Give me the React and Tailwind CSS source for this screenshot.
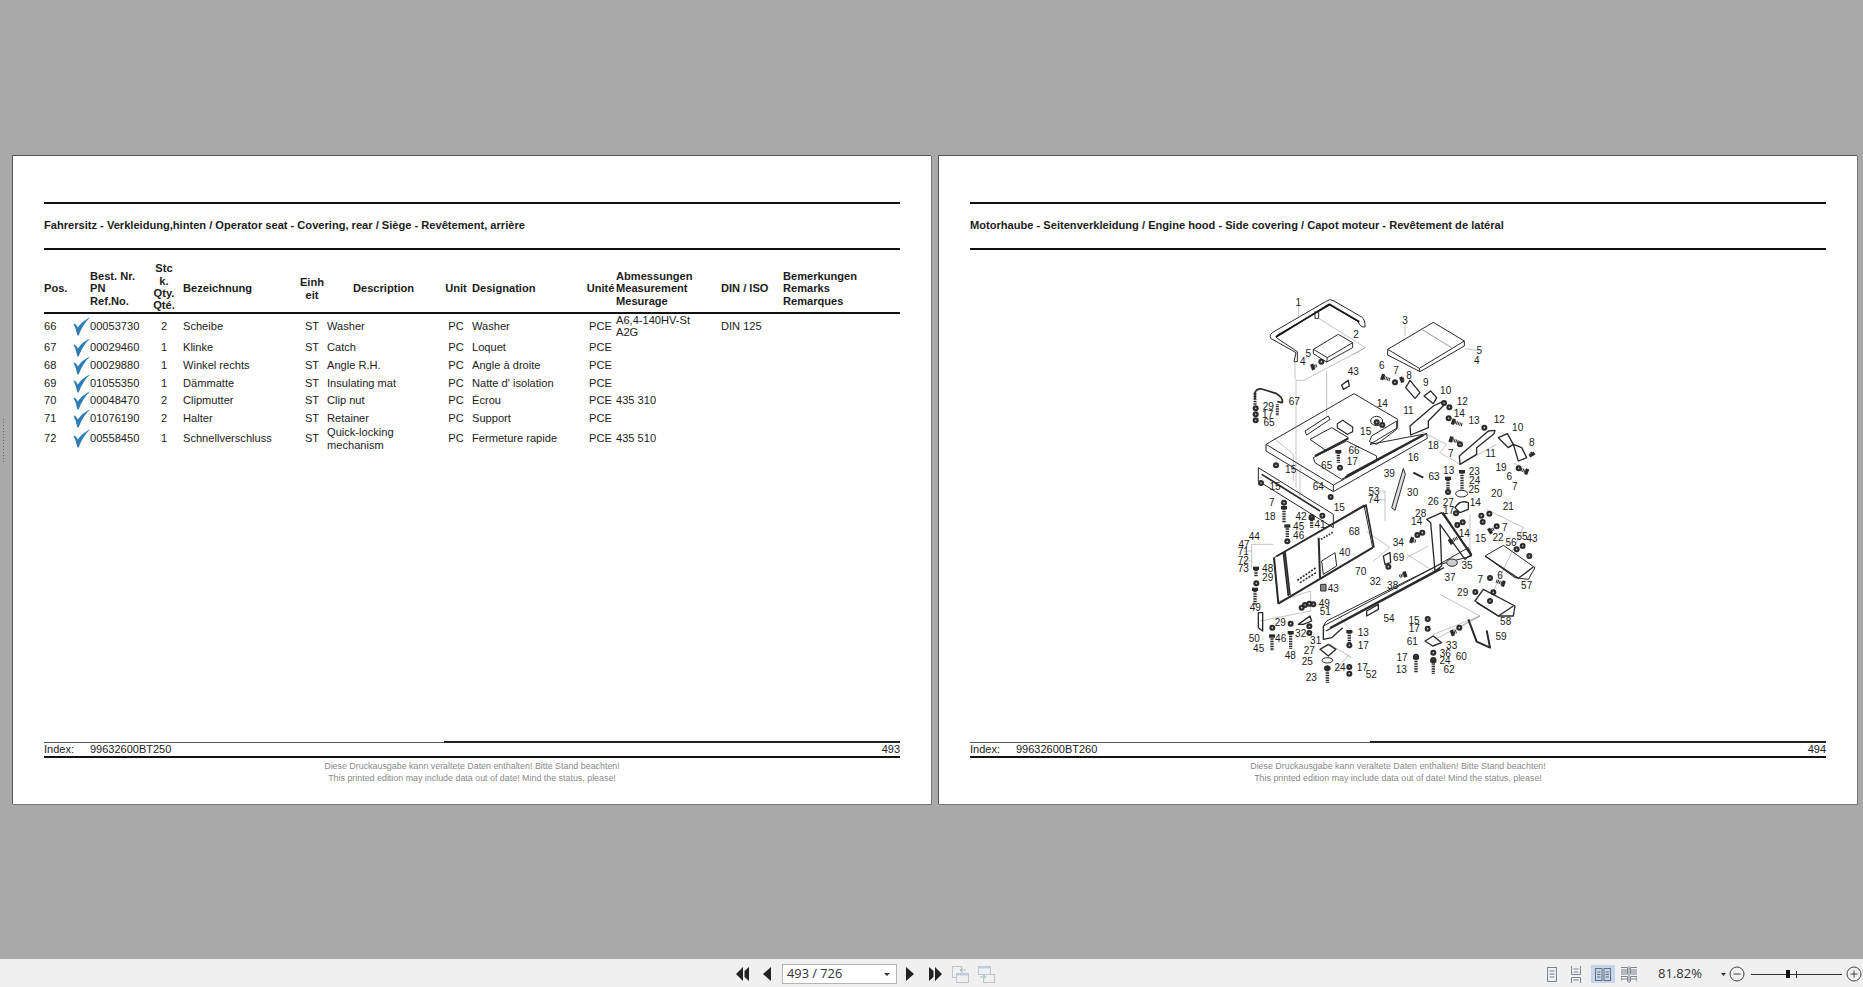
import React from "react";

const ROW_GRID = "grid grid-cols-[46px_61px_26px_120px_30px_113px_32px_115px_29px_105px_62px_117px] items-center";

const rows = [
  { pos: "66", pn: "00053730", qty: "2", de: "Scheibe", en: "Washer", fr: "Washer", meas: "A6,4-140HV-St A2G", din: "DIN 125", h: "h-[24px]" },
  { pos: "67", pn: "00029460", qty: "1", de: "Klinke", en: "Catch", fr: "Loquet", h: "h-[18px]" },
  { pos: "68", pn: "00029880", qty: "1", de: "Winkel rechts", en: "Angle R.H.", fr: "Angle à droite", h: "h-[18px]" },
  { pos: "69", pn: "01055350", qty: "1", de: "Dämmatte", en: "Insulating mat", fr: "Natte d' isolation", h: "h-[17px]" },
  { pos: "70", pn: "00048470", qty: "2", de: "Clipmutter", en: "Clip nut", fr: "Écrou", meas: "435 310", h: "h-[18px]" },
  { pos: "71", pn: "01076190", qty: "2", de: "Halter", en: "Retainer", fr: "Support", h: "h-[17px]" },
  { pos: "72", pn: "00558450", qty: "1", de: "Schnellverschluss", en: "Quick-locking mechanism", fr: "Fermeture rapide", meas: "435 510", h: "h-[25px]" },
];

// labels of the exploded drawing, in 3x coordinates of the drawing box
const labels = [
  [235,65,"1"],[408,160,"2"],[555,117,"3"],[778,208,"5"],[770,237,"4"],[265,217,"5"],[248,240,"4"],[400,270,"43"],
  [485,252,"6"],[528,268,"7"],[567,284,"8"],[617,303,"9"],[677,327,"10"],[727,360,"12"],[565,388,"11"],[718,397,"14"],
  [762,418,"13"],[487,366,"14"],[838,414,"12"],[893,440,"10"],[437,451,"15"],[145,377,"29"],[143,399,"17"],[147,424,"65"],
  [223,360,"67"],[640,494,"18"],[692,516,"7"],[812,518,"11"],[935,484,"8"],[843,558,"19"],[868,585,"6"],[884,615,"7"],
  [402,509,"66"],[397,541,"17"],[320,554,"65"],[580,530,"16"],[642,587,"63"],[508,576,"39"],[686,567,"13"],[763,572,"23"],
  [764,598,"24"],[762,624,"25"],[212,566,"15"],[165,615,"15"],[295,615,"64"],
  [462,630,"53"],[461,656,"74"],[578,634,"30"],[640,662,"26"],[830,636,"20"],[358,680,"15"],[155,663,"7"],[150,707,"18"],
  [243,707,"42"],[300,730,"41"],[236,735,"45"],[236,762,"46"],[103,765,"44"],[72,789,"47"],[70,812,"71"],[70,838,"72"],
  [70,863,"73"],[143,862,"48"],[143,889,"29"],[340,923,"43"],[374,813,"40"],[403,752,"68"],[106,979,"49"],[422,872,"70"],
  [466,900,"32"],[518,912,"38"],[535,784,"34"],[536,830,"69"],[602,697,"28"],[590,720,"14"],[685,663,"27"],[686,688,"17"],
  [766,665,"14"],[865,677,"21"],[733,757,"14"],[782,771,"15"],[854,740,"7"],[834,768,"22"],[906,765,"55"],[936,772,"43"],
  [873,783,"56"],[741,852,"35"],[690,888,"37"],[840,884,"6"],[781,896,"7"],[920,912,"57"],[728,933,"29"],[507,1011,"54"],
  [857,1021,"58"],[582,1018,"15"],[583,1043,"17"],[577,1081,"61"],[695,1094,"33"],[724,1126,"60"],[843,1066,"59"],
  [676,1116,"36"],[675,1138,"24"],[546,1128,"17"],[544,1166,"13"],[687,1166,"62"],[313,966,"49"],[316,990,"51"],
  [181,1025,"29"],[242,1058,"32"],[287,1077,"31"],[182,1072,"46"],[103,1071,"50"],[116,1103,"45"],[211,1124,"48"],
  [430,1053,"13"],[430,1092,"17"],[268,1109,"27"],[262,1140,"25"],[360,1160,"24"],[427,1158,"17"],[454,1179,"52"],[274,1188,"23"],
];

const nuts = [
  [304,242],[525,304],[672,366],[688,379],[686,412],[793,440],[720,490],[896,562],[107,382],[107,400],[107,418],
  [168,553],[123,606],[360,560],[470,424],[487,432],[684,633],[192,665],[275,708],[307,704],[332,648],[202,781],
  [109,907],[505,857],[592,762],[607,755],[708,697],[712,732],[728,724],[784,704],[788,723],[830,736],[808,698],[890,805],[908,795],[928,825],
  [810,891],[766,933],[820,934],[810,960],[623,1014],[623,1043],[588,1127],[640,1115],[640,1137],[718,1040],[212,1028],[268,1036],[268,1056],
  [388,1093],[388,1158],[388,1178],[322,1162],[157,1040],[280,970],[245,980],[255,972],[268,968],
];

// x, y, length, angle
const bolts = [
  [278,258,14,-20],[488,288,24,20],[545,296,8,-20],[700,422,28,20],[693,475,26,20],[920,572,-24,20],[936,521,-10,60],
  [355,512,34,90],[684,592,36,90],[726,572,56,90],[192,680,46,90],[275,712,30,90],[202,735,34,90],
  [108,862,26,90],[156,1065,44,90],[212,1055,50,90],[388,1052,34,90],[322,1162,44,90],[588,1130,46,90],[640,1140,40,90],
  [555,880,-20,-20],[575,777,-14,-160],[692,782,-24,150],[810,750,-14,150],[850,908,-24,20],[697,1056,14,-20],[105,925,46,90],
];

function Bolt({ x, y, len, a }) {
  return (
    <g transform={`translate(${x} ${y}) rotate(${a})`}>
      <rect x="-5" y="-9" width="10" height="18" fill="#2b2b2b" />
      <line x1="0" y1="0" x2={len} y2="0" stroke="#2b2b2b" strokeWidth="10" strokeDasharray="3 2" />
    </g>
  );
}

function PartsDrawing() {
  return (
    <svg width="360" height="410" viewBox="0 0 1080 1230" className="block shrink-0">
      <g fill="none" stroke="#2a2a2a" strokeWidth="3" strokeLinejoin="round">
        {/* bow */}
        <path d="M222 242L228 215L152 172Q145 160 165 150L320 60Q330 52 342 60L425 108Q436 115 435 138Q420 140 415 122L330 72L172 162Q165 168 172 172L232 212V242Z" />
        <path d="M168 168L328 70L418 122" strokeWidth="5" stroke="#111" />
        <path d="M285 90V112H296V90" />
        {/* small plate */}
        <path d="M280 205L355 160L398 185V200L320 243L280 218Z" />
        <path d="M280 205L322 230L398 185M322 230L320 243" />
        {/* cover plate */}
        <path d="M503 205L640 124L733 180V195L600 272L503 222Z" />
        <path d="M503 205L598 262L733 180M598 262L600 272" />
        <path d="M605 145L695 200" stroke="#999" />
        {/* thin leader lines */}
        <g stroke="#888" strokeWidth="1.5">
          <path d="M296 112L436 200L252 298L228 298V620M320 270V400M240 650V560M436 200L398 222M225 240V296" />
          <path d="M236 75V108M555 130V165M735 203L770 208M600 450L680 490L660 515L720 550L830 490M880 545L900 555" />
          <path d="M160 470L220 520V600M660 940L780 1005L700 1050M820 930L910 740L800 685M750 700V820M640 1060L780 1005M178 960L272 930V990L120 1020" />
          <path d="M95 790H160M95 790V860M95 810H70M95 840H70M455 630H495V720M455 656H495M440 752L510 800L460 840M560 830L625 795M640 870L560 820" />
          <path d="M350 1000L400 1055M330 1090L395 1130M340 1175L388 1120M645 1075L780 1005" />
        </g>
        {/* clamp */}
        <path d="M105 355V335Q110 322 125 324L170 338Q190 350 187 365L172 362" strokeWidth="5" />
        <path d="M105 335V372" strokeWidth="9" strokeDasharray="3 2" />
        <path d="M172 370V405" strokeWidth="9" strokeDasharray="3 2" />
        {/* base plate */}
        <path d="M138 490L402 338L533 415V440L450 490L620 458L622 472L340 632L138 510Z" />
        <path d="M138 490L340 612L620 458M340 612V632" />
        <path d="M255 450L325 405L330 415L260 462Z" />
        <path d="M270 475L335 440L385 470L320 510Z" />
        <path d="M352 428L368 418L398 438V452L382 460L352 440Z" strokeWidth="3.5" />
        <path d="M280 530L380 480L470 525V540L365 595L285 545Z" />
        <path d="M285 525L385 472M375 590L475 535M380 585L610 462" strokeWidth="6" />
        <path d="M455 465L530 420V445L470 490L448 482Z" />
        <ellipse cx="470" cy="420" rx="18" ry="14" />
        {/* brackets */}
        <path d="M570 435L640 375L668 362L672 372L625 420V440L572 462Z" strokeWidth="4" />
        <path d="M718 525L805 450L825 448L822 458L770 500V520L720 550Z" strokeWidth="4" />
        <path d="M557 320L570 298L600 335L585 352Z" strokeWidth="4" />
        <path d="M612 345L632 330L650 350L640 368Z" strokeWidth="4" />
        <path d="M835 470L862 458L880 490L865 500Z" strokeWidth="4" />
        <path d="M880 490L905 500L920 530L895 540Z" strokeWidth="4" />
        {/* cross strap */}
        <path d="M115 560L340 700V740L115 600Z" />
        <path d="M125 580L300 690" strokeWidth="5" />
        {/* gas strut */}
        <path d="M550 562L515 680L525 688L556 580Z" fill="#ddd" />
        <path d="M580 575L610 590" strokeWidth="6" />
        {/* radiator frame */}
        <path d="M162 830L432 672L458 800L175 968Z" />
        <path d="M170 826L438 672L462 800M190 815L205 945M195 812L210 942" strokeWidth="5" />
        <path d="M296 770L300 890M175 968L458 800" strokeWidth="6" />
        <path d="M305 840L345 815L350 855L310 880Z" />
        <path d="M232 898L288 860M240 905L288 875" strokeWidth="5" strokeDasharray="6 4" />
        <path d="M303 775L342 752" strokeWidth="5" strokeDasharray="5 4" />
        <path d="M162 830L175 968" strokeWidth="6" />
        {/* long rail */}
        <path d="M310 1035L660 850L755 825L745 800L640 860L320 1020Z" />
        <path d="M318 1050L672 860M330 1040L660 862M310 1035V1075L335 1070L368 1040" strokeWidth="4" />
        <path d="M440 990L475 970V985L440 1005Z" strokeWidth="4" />
        <path d="M620 715L665 695L755 820L735 835L660 730L665 855L645 870L632 725Z" strokeWidth="4" />
        <path d="M668 695L752 820" strokeWidth="6" />
        <ellipse cx="696" cy="845" rx="16" ry="11" fill="#ccc" />
        {/* right bracket */}
        <path d="M795 825L850 793L945 860L925 895L885 890Z" />
        <path d="M795 825L895 892L940 858" strokeWidth="4" />
        {/* side plates */}
        <path d="M765 960L790 925L885 975L880 1005L835 1005Z" strokeWidth="4" />
        <path d="M770 965L835 1005L880 975" strokeWidth="4" />
        <path d="M745 1015L770 1082L810 1100L800 1048" strokeWidth="6" />
        <path d="M300 1105L325 1090L348 1105L325 1125Z" strokeWidth="4" />
        <path d="M615 1080L640 1065L665 1085L638 1095Z" strokeWidth="4" />
        <ellipse cx="322" cy="1138" rx="16" ry="8" />
        <ellipse cx="725" cy="638" rx="18" ry="10" />
        <path d="M705 680Q720 655 745 665L745 685L720 695Z" strokeWidth="4" />
        <path d="M115 995H128V1050L115 1040Z" strokeWidth="4" />
        <path d="M235 1030L270 1005L275 1020L250 1030Z" strokeWidth="4" />
        <path d="M302 910H318V930H302Z" fill="#888" />
        <path d="M490 825L510 815L512 845L495 850Z" strokeWidth="4" />
        <path d="M365 312L385 298L388 315L370 325Z" strokeWidth="4" />
      </g>
      <g fill="#2b2b2b">
        {nuts.map(([x, y], i) => (
          <g key={i}>
            <circle cx={x} cy={y} r="9" />
            <circle cx={x} cy={y} r="2.5" fill="#ccc" />
          </g>
        ))}
      </g>
      {bolts.map(([x, y, len, a], i) => (
        <Bolt key={i} x={x} y={y} len={len} a={a} />
      ))}
      <g fill="#1a1a1a" fontSize="30" textAnchor="middle" dominantBaseline="central">
        {labels.map(([x, y, t], i) => (
          <text key={i} x={x} y={y}>{t}</text>
        ))}
      </g>
    </svg>
  );
}

function Check() {
  return (
    <svg width="18" height="19" viewBox="0 0 18 19" className="block shrink-0 -mr-px">
      <path d="M0.5 6.5Q3 6.5 4.8 10.5Q9 4 17.5 0.3Q10.5 6 5.6 18.5H4.4Q3 11.5 0.5 6.5Z" fill="#2f7db5" />
    </svg>
  );
}

function PartsTable() {
  return (
    <div className="text-[11.1px] leading-[12.3px] text-[#1c1c1c]">
      <div className={`${ROW_GRID} h-[64px] pt-[15px] font-bold border-b-2 border-[#111]`}>
        <div>Pos.</div>
        <div>Best. Nr.<br />PN<br />Ref.No.</div>
        <div className="text-center -mt-[3px]">Stc<br />k.<br />Qty.<br />Qté.</div>
        <div className="pl-[6px]">Bezeichnung</div>
        <div className="text-center">Einh<br />eit</div>
        <div className="text-center">Description</div>
        <div className="text-center">Unit</div>
        <div>Designation</div>
        <div className="text-center -ml-[2px]">Unité</div>
        <div>Abmessungen<br />Measurement<br />Mesurage</div>
        <div>DIN / ISO</div>
        <div>Bemerkungen<br />Remarks<br />Remarques</div>
      </div>
      {rows.map((r) => (
        <div key={r.pos} className={`${ROW_GRID} ${r.h}`}>
          <div className="flex justify-between items-center">
            <span>{r.pos}</span>
            <Check />
          </div>
          <div>{r.pn}</div>
          <div className="text-center">{r.qty}</div>
          <div className="pl-[6px]">{r.de}</div>
          <div className="text-center">ST</div>
          <div>{r.en}</div>
          <div className="text-center">PC</div>
          <div>{r.fr}</div>
          <div className="text-center -ml-[2px]">PCE</div>
          <div className="max-w-[82px]">{r.meas}</div>
          <div>{r.din}</div>
          <div></div>
        </div>
      ))}
    </div>
  );
}

function Page({ title, index, num, children }) {
  return (
    <div className="w-[919px] h-[649px] bg-white border-t border-l border-[#555] shadow-[1px_1px_0_#777] flex flex-col pt-[46px] pl-[31px] pr-[31px]">
      <div className="h-[2px] bg-[#111] shrink-0" />
      <div className="h-[44px] pb-[1px] flex items-center font-bold text-[11.1px] text-[#1c1c1c] shrink-0">{title}</div>
      <div className="h-[2px] bg-[#111] shrink-0" />
      {children}
      <div className="mt-auto shrink-0">
        <div className="flex items-end h-[2px]">
          <div className="w-[400px] h-px bg-[#555]" />
          <div className="flex-1 h-[2px] bg-[#222]" />
        </div>
        <div className="h-[13px] flex items-center text-[11px] text-[#222]">
          <span className="w-[46px]">Index:</span>
          <span>{index}</span>
          <span className="ml-auto">{num}</span>
        </div>
        <div className="h-[2px] bg-[#111]" />
        <div className="h-[46px] pt-[2px] text-center text-[8.9px] leading-[12.3px] text-[#8a8a8a]">
          Diese Druckausgabe kann veraltete Daten enthalten! Bitte Stand beachten!<br />
          This printed edition may include data out of date! Mind the status, please!
        </div>
      </div>
    </div>
  );
}

const Tri = ({ d, fill = "#222", w = 13 }) => (
  <svg width={w} height="14" viewBox={`0 0 ${w} 14`} className="block shrink-0"><path d={d} fill={fill} /></svg>
);

function SwapIcon({ flip }) {
  return (
    <svg width="17" height="17" viewBox="0 0 17 17" className="block shrink-0" fill="none" stroke="#c0c4c9">
      {flip ? (
        <>
          <rect x="0.5" y="0.5" width="12" height="8" />
          <rect x="5.5" y="8.5" width="11" height="8" fill="#f0f0f0" />
          <path d="M1 1.5H12" stroke="#bcd2e6" strokeWidth="2" />
          <path d="M2 11H8M5.5 9L8 11L5.5 13" stroke="#a3c4b4" />
        </>
      ) : (
        <>
          <rect x="0.5" y="0.5" width="9" height="11" />
          <rect x="4.5" y="7.5" width="12" height="9" fill="#f0f0f0" />
          <path d="M5 8.5H16" stroke="#bcd2e6" strokeWidth="2" />
          <path d="M14 4H8M10.5 2L8 4L10.5 6" stroke="#a3c4b4" />
        </>
      )}
    </svg>
  );
}

const ViewIcon = ({ children, w = 12 }) => (
  <svg width={w} height="17" viewBox={`0 0 ${w} 17`} className="block shrink-0" fill="none" stroke="#7d8590">{children}</svg>
);

function Toolbar() {
  return (
    <div className="h-[28px] pt-[2px] bg-[#f0f0f0] relative flex items-center shrink-0 text-[#333] [font-family:'Open_Sans',sans-serif]">
      <div className="flex items-center ml-[736px]">
        <Tri d="M7 0V14L0 7ZM13 0V14L8.5 10V4Z" />
        <div className="ml-[14px]"><Tri w={8} d="M8 0V14L0 7Z" /></div>
        <div className="ml-[11px] w-[115px] h-[20px] bg-white border border-[#b5b5b5] flex items-center pl-1 pr-1.5 text-[12.8px]">
          <span>493 / 726</span>
          <svg width="6" height="3" viewBox="0 0 6 3" className="ml-auto"><path d="M0 0H6L3 3Z" fill="#333" /></svg>
        </div>
        <div className="ml-[9px]"><Tri w={8} d="M0 0V14L8 7Z" /></div>
        <div className="ml-[15px]"><Tri d="M0 0V14L4.5 10V4ZM6 0V14L13 7Z" /></div>
        <div className="ml-[10px]"><SwapIcon /></div>
        <div className="ml-[9px]"><SwapIcon flip /></div>
      </div>
      <div className="flex items-center ml-[551px]">
        <ViewIcon>
          <rect x="1.5" y="1.5" width="9" height="14" />
          <path d="M3.5 5H8.5M3.5 8H8.5M3.5 11H8.5" />
        </ViewIcon>
        <div className="ml-[12px]">
          <ViewIcon>
            <path d="M1.5 0V8.5H10.5V0M3.5 3H8.5M3.5 6H8.5M1.5 17V11.5H10.5V17M3.5 14H8.5" />
          </ViewIcon>
        </div>
        <div className="ml-[9px] w-[24px] h-[18px] bg-[#c6d6ea] flex items-center justify-center">
          <svg width="16" height="13" viewBox="0 0 16 13" fill="none" stroke="#66707c">
            <rect x="0.5" y="0.5" width="6.5" height="12" />
            <rect x="9" y="0.5" width="6.5" height="12" />
            <path d="M2 4H5.5M2 6.5H5.5M2 9H5.5M10.5 4H14M10.5 6.5H14M10.5 9H14" />
          </svg>
        </div>
        <div className="ml-[6px]">
          <ViewIcon w={16}>
            <path d="M0 1.5H6.5V8H0M0 4H6.5M0 6H6.5M16 1.5H9.5V8H16M9.5 4H16M9.5 6H16M0 15.5V10.5H6.5V15.5M0 13H6.5M16 15.5V10.5H9.5V15.5M9.5 13H16M8 0V17" />
          </ViewIcon>
        </div>
        <span className="ml-[21px] text-[13px] w-[63px]">81.82%</span>
        <svg width="5" height="3" viewBox="0 0 5 3" className="block shrink-0"><path d="M0 0H5L2.5 3Z" fill="#333" /></svg>
        <svg width="16" height="16" viewBox="0 0 16 16" className="block shrink-0 ml-[3px]" fill="none" stroke="#444">
          <circle cx="8" cy="8" r="7" />
          <path d="M4.5 8H11.5" />
        </svg>
        <div className="ml-[6px] w-[91px] h-[1px] bg-[#333] relative">
          <div className="absolute left-[35px] -top-[3.5px] w-[4px] h-[8px] bg-[#111]" />
          <div className="absolute left-[45px] -top-[3px] w-px h-[7px] bg-[#333]" />
        </div>
        <svg width="16" height="16" viewBox="0 0 16 16" className="block shrink-0 ml-[4px]" fill="none" stroke="#444">
          <circle cx="8" cy="8" r="7" />
          <path d="M4.5 8H11.5M8 4.5V11.5" />
        </svg>
      </div>
    </div>
  );
}

export default function App() {
  return (
    <div className="w-[1863px] h-[987px] overflow-hidden bg-[#a9a9a9] flex flex-col relative [font-family:'Liberation_Sans',Arial,sans-serif]">
      {/* splitter grip */}
      <div className="absolute left-[2px] top-[418px] w-[4px] h-[46px] bg-[radial-gradient(#666_0.6px,transparent_1px)] bg-[length:3px_3px]" />
      <div className="flex-1 flex gap-[7px] pt-[155px] pl-[12px]">
        <Page
          title="Fahrersitz - Verkleidung,hinten / Operator seat - Covering, rear / Siège - Revêtement, arrière"
          index="99632600BT250"
          num="493"
        >
          <PartsTable />
        </Page>
        <Page
          title="Motorhaube - Seitenverkleidung / Engine hood - Side covering / Capot moteur - Revêtement de latéral"
          index="99632600BT260"
          num="494"
        >
          <div className="ml-[250px] mt-[31px]">
            <PartsDrawing />
          </div>
        </Page>
      </div>
      <Toolbar />
    </div>
  );
}
